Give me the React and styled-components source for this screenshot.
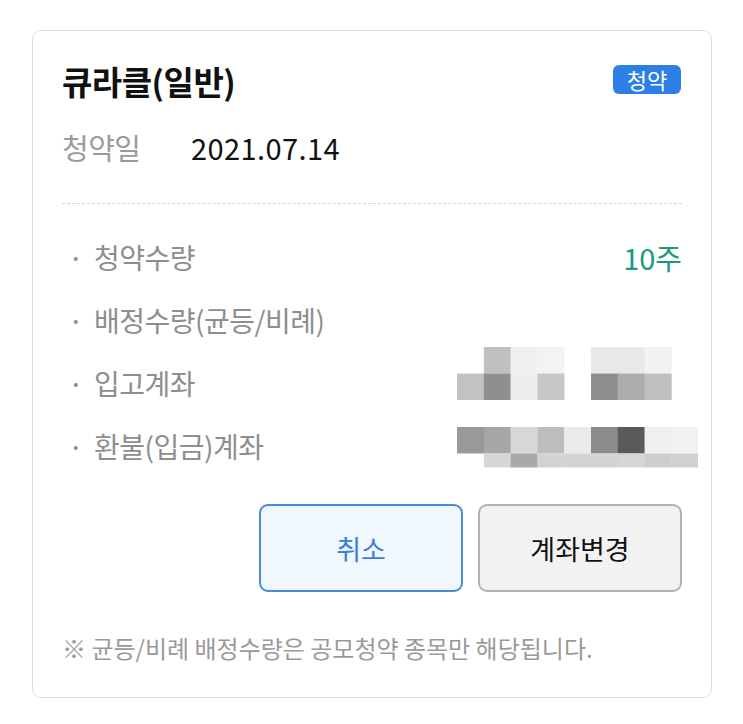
import React from "react";
import styled, { createGlobalStyle } from "styled-components";

const Global = createGlobalStyle`
  html, body { margin: 0; padding: 0; background: #ffffff; }
  body { font-family: "Noto Sans CJK KR", "Noto Sans", sans-serif; }
  * { box-sizing: border-box; }
`;

const Card = styled.section`
  margin: 30px 31px 0 32px;
  width: 680px;
  height: 668px;
  border: 1.5px solid #dedede;
  border-radius: 9px;
  background: #fff;
  padding: 29px 29px 0 29px;
  display: flex;
  flex-direction: column;
`;

const Header = styled.div`
  display: flex;
  justify-content: space-between;
  align-items: center;
  height: 42px;
`;

const Title = styled.h1`
  margin: 0;
  font-size: 33px;
  font-weight: 700;
  color: #111;
  letter-spacing: -0.5px;
  line-height: 42px;
`;

const Badge = styled.span`
  display: inline-flex;
  align-items: center;
  justify-content: center;
  width: 68px;
  height: 29px;
  border-radius: 6px;
  background: #2b7fe6;
  color: #fff;
  font-size: 22px;
  line-height: 1;
  margin-top: -4px;
  margin-right: 1px;
`;

const DateRow = styled.div`
  display: flex;
  align-items: center;
  height: 36px;
  margin-top: 27px;
`;

const DateLabel = styled.span`
  color: #9a9a9a;
  width: 129px;
  font-size: 29px;
  letter-spacing: -0.5px;
`;

const DateValue = styled.span`
  color: #111;
  font-size: 29px;
  letter-spacing: 0.4px;
`;

const Divider = styled.hr`
  margin: 38px 0 0;
  border: none;
  border-top: 1.5px dashed #d6d6d6;
  height: 0;
`;

const List = styled.ul`
  list-style: none;
  margin: 21px 0 0;
  padding: 0;
`;

const Row = styled.li`
  display: flex;
  justify-content: space-between;
  align-items: center;
  height: 63px;
  font-size: 28px;
`;

const Label = styled.span`
  display: flex;
  align-items: center;
  color: #8e8e8e;
  letter-spacing: -0.5px;
`;

const Bullet = styled.span`
  flex: none;
  width: 32px;
  padding-left: 6px;
  color: #8e8e8e;
`;

const Value = styled.span`
  color: ${(p) => p.$color || "#111"};
  font-size: 29px;
`;

const Mosaic = styled.svg`
  display: block;
  flex: none;
  margin: ${(p) => p.$margin};
`;

const Buttons = styled.div`
  display: flex;
  justify-content: flex-end;
  gap: 15px;
  margin-top: 27px;
`;

const Button = styled.button`
  width: 204px;
  height: 88px;
  border-radius: 9px;
  border: 2px solid ${(p) => (p.$primary ? "#4a8ad9" : "#b3b3b3")};
  background: ${(p) => (p.$primary ? "#f1f7fe" : "#f2f2f2")};
  color: ${(p) => (p.$primary ? "#3a7fd6" : "#111")};
  font-family: inherit;
  font-size: 27px;
  padding: 0;
  cursor: pointer;
`;

const Note = styled.p`
  margin: 40px 0 0;
  font-size: 24px;
  line-height: 32px;
  color: #9a9a9a;
  letter-spacing: 0;
`;

const CW = 26.8;

function Cells({ cells, y, h }) {
  return cells.map((c, i) =>
    c ? <rect key={i} x={i * CW} y={y} width={CW + 0.3} height={h} fill={c} /> : null
  );
}

const m1Top = [null, "#c0c0c0", "#efefef", "#f3f3f3", null, "#e8e8e8", "#e8e8e8", "#f2f2f2"];
const m1Bot = ["#c2c2c2", "#8f8f8f", "#eeeeee", "#c7c7c7", null, "#8e8e8e", "#acacac", "#c0c0c0"];
const m2Top = ["#999999", "#a6a6a6", "#d7d7d7", "#bdbdbd", "#ebebeb", "#8b8b8b", "#5a5a5a", "#efefef", "#f2f2f2"];
const m2Bot = [null, "#d6d6d6", "#a9a9a9", "#d3d3d3", "#d3d3d3", "#d3d3d3", "#d6d6d6", "#cecece", "#d0d0d0"];

function Item({ label, children }) {
  return (
    <Row>
      <Label>
        <Bullet>·</Bullet>
        {label}
      </Label>
      {children}
    </Row>
  );
}

export default function App() {
  return (
    <>
      <Global />
      <Card>
        <Header>
          <Title>큐라클(일반)</Title>
          <Badge>청약</Badge>
        </Header>
        <DateRow>
          <DateLabel>청약일</DateLabel>
          <DateValue>2021.07.14</DateValue>
        </DateRow>
        <Divider />
        <List>
          <Item label="청약수량">
            <Value $color="#1a9a7f">10주</Value>
          </Item>
          <Item label="배정수량(균등/비례)" />
          <Item label="입고계좌">
            <Mosaic width="216" height="53" viewBox="0 0 216 53" $margin="0 9px 19px 0">
              <Cells cells={m1Top} y={0} h={26.5} />
              <Cells cells={m1Bot} y={26.5} h={26.5} />
            </Mosaic>
          </Item>
          <Item label="환불(입금)계좌">
            <Mosaic width="241" height="41" viewBox="0 0 241 41" $margin="4px -16px 0 0">
              <Cells cells={m2Top} y={0} h={26.5} />
              <Cells cells={m2Bot} y={26.5} h={14} />
            </Mosaic>
          </Item>
        </List>
        <Buttons>
          <Button $primary>취소</Button>
          <Button>계좌변경</Button>
        </Buttons>
        <Note>※ 균등/비례 배정수량은 공모청약 종목만 해당됩니다.</Note>
      </Card>
    </>
  );
}
